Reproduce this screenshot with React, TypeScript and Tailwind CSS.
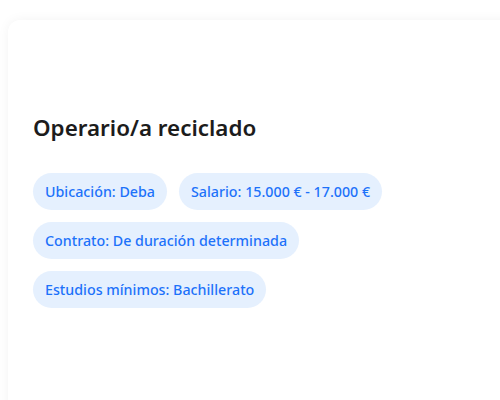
import React from 'react';

const tags = [
  ['Ubicación: Deba', 'Salario: 15.000 € - 17.000 €'],
  ['Contrato: De duración determinada'],
  ['Estudios mínimos: Bachillerato'],
];

const App = () => {
  return (
    <div className="w-[500px] h-[400px] overflow-hidden bg-white pl-2 pt-5" style={{ fontFamily: '"Noto Sans", "Open Sans", sans-serif' }}>
      <div className="w-[560px] h-[440px] bg-white rounded-xl shadow-[0_0_12px_rgba(0,0,0,0.05)] px-[25px] pt-[92px]">
        <h1 className="text-[22.4px] leading-8 font-semibold text-[#1c1c1c]">Operario/a reciclado</h1>
        <div className="mt-[29px] flex flex-col gap-3">
          {tags.map((row, i) => (
            <div key={i} className="flex gap-3">
              {row.map((t) => (
                <span key={t} className="h-[37px] px-3 flex items-center rounded-full bg-[#e5f0fe] text-[#1d72fa] text-[14.25px] font-medium">
                  {t}
                </span>
              ))}
            </div>
          ))}
        </div>
      </div>
    </div>
  );
};

export default App;
